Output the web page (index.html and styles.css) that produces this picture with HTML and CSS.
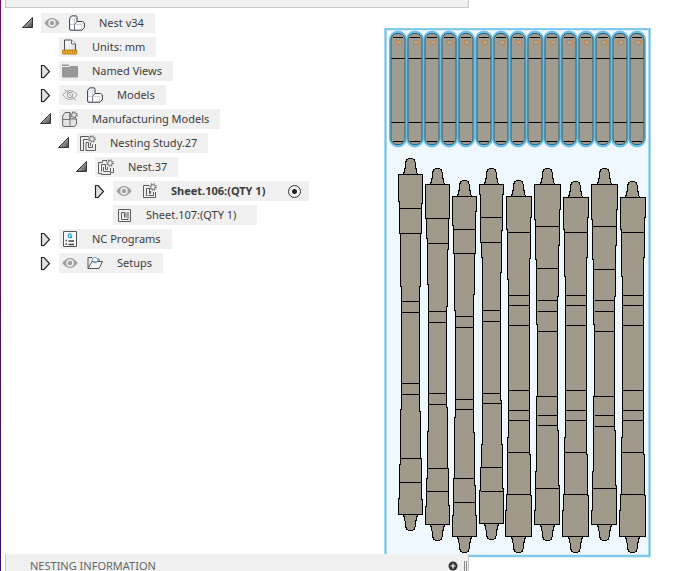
FILE: index.html
```html
<!DOCTYPE html>
<html lang="en">
<head>
<meta charset="utf-8">
<title>Nest v34</title>
<link rel="stylesheet" href="styles.css">
</head>
<body>
<svg class="defs" aria-hidden="true">
  <defs>
    <linearGradient id="shade" x1="0" y1="0" x2="1" y2="1"><stop offset="0" stop-color="#f4f4f4"/><stop offset=".5" stop-color="#999"/><stop offset="1" stop-color="#444"/></linearGradient>
    <linearGradient id="paper" x1="0" y1="0" x2="1" y2="1"><stop offset="0" stop-color="#fff"/><stop offset="1" stop-color="#d8dbe0"/></linearGradient>
    <symbol id="open" viewBox="0 0 20 20"><path d="M1.500 14.500 11.500 4.500V14.500z" fill="url(#shade)" stroke="#333"/></symbol>
    <symbol id="closed" viewBox="0 0 20 20"><path d="M2.500 4.500H5L10.500 10.500 5 16.500H2.500z" fill="#e2e2e4" stroke="#222" stroke-width="1.200"/></symbol>
    <symbol id="eye" viewBox="0 0 16 16"><path d="M.3 8Q4 3 8 3T15.700 8Q12 13 8 13T.3 8z" fill="#a0a0a0"/><circle cx="8" cy="8" r="3" fill="#a0a0a0" stroke="#f0f0f0" stroke-width="1.500"/></symbol>
    <symbol id="eye-off" viewBox="0 0 16 16"><g fill="none" stroke="#a2a2a2"><path d="M.7 8Q4 3.500 8 3.500T15.300 8Q12 12.500 8 12.500T.7 8z"/><circle cx="8" cy="8" r="2.700"/><path d="M2.500 2.500 14 13.500"/></g></symbol>
    <symbol id="cube" viewBox="0 0 16 16"><path d="M.6 3.500 2.600.9H7Q8 .9 8 2V6.500H13.500L15.400 8V12.500L13 15.200H2Q.6 15.200.6 14z" fill="#fbfcfd" stroke="#34383f" stroke-linejoin="round"/><path d="M1 4H5.500L8 1.500M5.500 4V9M1 9.500H5.500L8 7M5.500 9.500V15M6 9.500H12.500L15 8M12.500 9.500V15" fill="none" stroke="#c3c8d0" stroke-width=".8"/><path d="M8 6.500 5.500 9.500V15" fill="none" stroke="#5d626b" stroke-width=".8"/></symbol>
    <symbol id="units" viewBox="0 0 16 16"><path d="M2.500 12V1H9.500L13.500 5V12z" fill="url(#paper)" stroke="#474b52"/><path d="M9.500 1V5H13.500" fill="#fff" stroke="#474b52" stroke-width=".8"/><path d="M.7 11.200H14.700V15H.7z" fill="#f4b63b" stroke="#b97808"/><path d="M3 12.500V13.500M5.500 12.500V13.500M8 12.500V13.500M10.500 12.500V13.500M12.800 12.500V13.500" stroke="#7d4c00"/></symbol>
    <symbol id="folder" viewBox="0 0 16 16"><path d="M0 1.500H7V3H0zM0 4H7L8.500 3H16V14.500H0z" fill="#989898"/></symbol>
    <symbol id="gear" viewBox="0 0 8 8"><circle cx="4" cy="4" r="3" fill="none" stroke="#777" stroke-width="1.700" stroke-dasharray="1.200 1.150"/><circle cx="4" cy="4" r="2.300" fill="#f0f0f0" stroke="#777"/></symbol>
    <symbol id="models" viewBox="0 0 16 16"><path d="M.7 5 3 1.500H8V8H14.500V13L12.500 15.500H2Q.7 15.500.7 14z" fill="#e3e3e3" stroke="#666"/><path d="M.7 8.500H8V15.500M8 1.500V8.500" fill="none" stroke="#777"/><use href="#gear" x="8" y="0" width="8" height="8"/></symbol>
    <symbol id="study" viewBox="0 0 16 16"><path d="M.5 15.500V1.500H9M.5 15.500H3.500V4.500H8.500M6 15.500V7.500H8.500M5.500 15.500H15.500V9M8.500 7.500V12.500H12.500V9.500M10.500 8V11" fill="none" stroke="#5c5c5c"/><use href="#gear" x="8" y="0" width="8" height="8"/></symbol>
    <symbol id="nest" viewBox="0 0 16 16"><path d="M4.500 3.500V1.500H9M4.500 3.500H.5V14.500H3.500V15.500H12.500V13.500H15.500V9M3.500 12.500V5.500H7.500V10.500H9.500V8M5.500 12V8M12.500 9V12.500H5.500" fill="none" stroke="#5c5c5c"/><use href="#gear" x="8" y="0" width="8" height="8"/></symbol>
    <symbol id="sheet-gear" viewBox="0 0 16 16"><path d="M8 2.500H2.500V14.500H14.500V9M5.500 12.500V5.500H8.500V10.500H9.500V8M5 12.500H6.500M12.500 9V12.500H7.500" fill="none" stroke="#5c5c5c"/><use href="#gear" x="8" y="0" width="8" height="8"/></symbol>
    <symbol id="sheet" viewBox="0 0 16 16"><path d="M2.500 2.500H14.500V14.500H2.500zM5.500 12V5.500H8.500V10.500M10 5.500V10.500M5.500 12.500H12V5" fill="none" stroke="#5c5c5c"/></symbol>
    <symbol id="gcode" viewBox="0 0 16 16"><path d="M1.500 .5H14.500V15.500H1.500z" fill="#f8f8f8" stroke="#555"/><path d="M9.500 3.200Q6.300 2.300 6.300 4.700T9.500 6.500V4.900H8.200" fill="none" stroke="#1a9ae0" stroke-width="1.200"/><path d="M3.500 9.500H5M3.500 13H5M6.500 10H12M6.500 13.500H12" stroke="#444" stroke-width="1.300"/></symbol>
    <symbol id="setups" viewBox="0 0 16 16"><path d="M1 13.500V2.500H5L6 4H12V6.500" fill="none" stroke="#555"/><path d="M5 7V5.500Q5 2.500 8 2.500T11 5.500V7" fill="#fff" stroke="#7a9db4"/><path d="M1 13.500 5 6.500H15.500L12 13.500z" fill="#f5f5f5" stroke="#555"/><path d="M6 6.500Q8 9.500 10.500 6.500" fill="#cfe6f3" stroke="#4a9cc6"/></symbol>

    <g id="strip">
      <rect x="-8" y="31.500" width="16" height="115" rx="8" fill="#6cc0e8" stroke="#6cc0e8" stroke-width="2"/>
      <rect x="-7" y="33.500" width="14" height="111" rx="6" fill="#a09c8f" stroke="#2f6076"/>
      <path d="M-5 37.500H5M-6.500 58.500H6.500M-6.500 122.500H6.500M-5 141.500H5" stroke="#000"/>
      <path d="M-1.500 40.500H3.500V44.500H-1.500z" fill="#a8a79b" stroke="#c0834c"/>
    </g>
    <path id="tip" d="M-7 0-6-4-5-8-4.500-13Q-4-15.500-1.500-16H1.500Q4-15.500 4.500-13L5-8 6-4 7 0z"/>
    <g id="part-f">
      <use href="#tip" x="547" y="184"/><use href="#tip" transform="translate(547 524) scale(1 -1)"/>
      <path d="M534 184V219H535V259H536V324H537V396H536V471H535V510H534V524H559V485H558V430H557V296H558V245H559V209H560V184z"/>
    </g>
    <g id="part-g">
      <use href="#tip" x="575" y="197"/><use href="#tip" transform="translate(575 536) scale(1 -1)"/>
      <path d="M563 197V229H564V276H565V437H564V494H563V510H562V536H588V495H587V454H586V257H587V217H588V197z"/>
      <path d="M564 232H587M565 295H586M565 305H586M565 325H586M565 390H586M565 410H586M565 420H586M564 452H586M564 494H587"/>
    </g>
  </defs>
</svg>

<main class="workspace">
  <div class="top-dock"></div>
  <nav class="browser" aria-label="Browser">
    <ul class="tree">
      <li>
        <div class="row"><button class="twisty" aria-label="Collapse Nest v34"><svg><use href="#open"/></svg></button><div class="node"><svg class="icon"><use href="#eye"/></svg><svg class="icon second"><use href="#cube"/></svg><span class="name">Nest v34</span></div></div>
        <ul>
          <li><div class="row"><span class="twisty"></span><div class="node"><svg class="icon"><use href="#units"/></svg><span class="name">Units: mm</span></div></div></li>
          <li><div class="row"><button class="twisty" aria-label="Expand Named Views"><svg><use href="#closed"/></svg></button><div class="node"><svg class="icon"><use href="#folder"/></svg><span class="name">Named Views</span></div></div></li>
          <li><div class="row"><button class="twisty" aria-label="Expand Models"><svg><use href="#closed"/></svg></button><div class="node"><svg class="icon"><use href="#eye-off"/></svg><svg class="icon second"><use href="#cube"/></svg><span class="name">Models</span></div></div></li>
          <li>
            <div class="row"><button class="twisty" aria-label="Collapse Manufacturing Models"><svg><use href="#open"/></svg></button><div class="node"><svg class="icon"><use href="#models"/></svg><span class="name">Manufacturing Models</span></div></div>
            <ul>
              <li>
                <div class="row"><button class="twisty" aria-label="Collapse Nesting Study.27"><svg><use href="#open"/></svg></button><div class="node"><svg class="icon"><use href="#study"/></svg><span class="name">Nesting Study.27</span></div></div>
                <ul>
                  <li>
                    <div class="row"><button class="twisty" aria-label="Collapse Nest.37"><svg><use href="#open"/></svg></button><div class="node"><svg class="icon"><use href="#nest"/></svg><span class="name">Nest.37</span></div></div>
                    <ul>
                      <li><div class="row"><button class="twisty" aria-label="Expand Sheet.106"><svg><use href="#closed"/></svg></button><div class="node"><svg class="icon"><use href="#eye"/></svg><svg class="icon second"><use href="#sheet-gear"/></svg><label class="name sheet-name active" for="sheet106">Sheet.106:(QTY 1)</label><input class="activate" type="radio" id="sheet106" name="sheet" checked></div></div></li>
                      <li><div class="row"><span class="twisty"></span><div class="node"><svg class="icon"><use href="#sheet"/></svg><span class="name sheet-name">Sheet.107:(QTY 1)</span></div></div></li>
                    </ul>
                  </li>
                </ul>
              </li>
            </ul>
          </li>
          <li><div class="row"><button class="twisty" aria-label="Expand NC Programs"><svg><use href="#closed"/></svg></button><div class="node"><svg class="icon"><use href="#gcode"/></svg><span class="name">NC Programs</span></div></div></li>
          <li><div class="row"><button class="twisty" aria-label="Expand Setups"><svg><use href="#closed"/></svg></button><div class="node"><svg class="icon"><use href="#eye"/></svg><svg class="icon second"><use href="#setups"/></svg><span class="name">Setups</span></div></div></li>
        </ul>
      </li>
    </ul>
  </nav>

  <svg class="sheet" viewBox="384 28 267 530" role="img" aria-label="Nested sheet">
    <rect x="385.500" y="29" width="264" height="527" fill="#f0f8ff" stroke="#b9e2f6" stroke-width="3"/>
    <rect x="385.500" y="29" width="264" height="527" fill="none" stroke="#68bfe9" stroke-width="1.400"/>
    <use href="#strip" x="398"/><use href="#strip" x="415"/><use href="#strip" x="432"/><use href="#strip" x="449"/><use href="#strip" x="466"/>
    <use href="#strip" x="484"/><use href="#strip" x="501"/><use href="#strip" x="518"/><use href="#strip" x="535"/><use href="#strip" x="552"/>
    <use href="#strip" x="569"/><use href="#strip" x="586"/><use href="#strip" x="603"/><use href="#strip" x="620"/><use href="#strip" x="637"/>
    <g class="parts" transform="translate(.5 .5)">
      <use href="#tip" x="410" y="174"/><use href="#tip" transform="translate(410 514) scale(1 -1)"/>
      <path d="M398 174V201H399V233H400V286H401V409H400V464H399V498H398V514H422V499H421V458H420V411H419V286H420V233H421V203H422V174z"/>
      <path d="M399 208H421M399 233H421M401 301H419M401 312H419M401 383H419M401 394H419M400 458H420M399 482H421"/>

      <use href="#tip" x="437" y="184"/><use href="#tip" transform="translate(437 524) scale(1 -1)"/>
      <path d="M425 184V218H426V238H427V284H428V431H427V478H426V506H425V524H449V505H448V468H447V407H446V306H447V249H448V218H449V184z"/>
      <path d="M426 218H448M427 243H448M428 311H446M428 322H446M428 393H446M428 404H446M427 468H447M426 491H448"/>

      <use href="#tip" x="464" y="196"/><use href="#tip" transform="translate(464 536) scale(1 -1)"/>
      <path d="M452 196V225H453V253H454V310H455V417H454V478H453V515H452V536H476V515H475V485H474V432H473V294H474V253H475V211H476V196z"/>
      <path d="M453 229H475M454 253H474M455 316H473M455 327H473M455 399H473M455 409H473M454 478H474M453 502H475"/>

      <use href="#tip" x="491" y="184"/><use href="#tip" transform="translate(491 523) scale(1 -1)"/>
      <path d="M479 184V194H480V242H481V257H482V444H481V467H480V490H479V523H503V488H502V444H501V400H500V272H501V230H502V194H503V184z"/>
      <path d="M480 217H502M481 242H501M482 310H500M482 321H500M482 393H500M482 403H500M481 467H501M480 491H502"/>

      <use href="#tip" x="518" y="196"/><use href="#tip" transform="translate(518 536) scale(1 -1)"/>
      <path d="M506 196V229H507V279H508V437H507V494H506V510H505V536H531V495H530V454H529V258H530V217H531V196z"/>
      <path d="M507 232H530M508 295H529M508 305H529M508 325H529M508 390H529M508 410H529M508 420H529M507 452H529M507 494H530"/>

      <use href="#part-f"/>
      <path d="M535 226H559M536 268H558M537 300H557M537 311H557M537 331H557M537 396H557M537 415H557M537 425H557M535 488H558"/>
      <use href="#part-g"/>
      <use href="#part-f" x="57"/>
      <path d="M592 226H616M593 269H615M594 300H614M594 311H614M594 331H614M594 396H614M594 415H614M594 426H614M592 488H615"/>
      <use href="#part-g" x="57"/>
    </g>
  </svg>

  <section class="bottom-dock">
    <h2>NESTING INFORMATION</h2>
    <button class="add" aria-label="Add"><svg viewBox="0 0 10 10"><circle cx="5" cy="5" r="4.500" fill="#333"/><path d="M2.500 5H7.500M5 2.500V7.500" stroke="#fff" stroke-width="1.200"/></svg></button>
    <span class="grip"></span>
  </section>
</main>
</body>
</html>
```
FILE: styles.css
```css
* { box-sizing: border-box; }

body {
  margin: 0;
  background: #fff;
  color: #3c3c3c;
  font: 11px/20px "Noto Sans", sans-serif;
}

.defs { position: absolute; width: 0; height: 0; }

button { padding: 0; border: 0; background: none; }

ul { margin: 0; padding: 0; list-style: none; }

.workspace {
  position: relative;
  display: flex;
  align-items: flex-start;
  min-height: 100vh;
  border-left: 1px solid;
  border-image: linear-gradient(#701070, #30106c) 1;
  overflow: hidden;
}

.browser { flex: 1; padding: 13px 0 0 20px; }

.tree ul { padding-left: 18px; }

.row { display: flex; height: 24px; }

.twisty { flex: none; width: 20px; height: 20px; }
.twisty svg { display: block; width: 20px; height: 20px; }

.node {
  display: flex;
  align-items: center;
  height: 20px;
  padding: 0 11px 0 3px;
  background: #f0f0f0;
  white-space: nowrap;
}

.icon { flex: none; width: 16px; height: 16px; }
.second { margin-left: 9px; }
.name { margin-left: 14px; }
.sheet-name { min-width: 100px; }
.active { font-weight: 700; }

.activate {
  appearance: none;
  width: 13px;
  height: 13px;
  margin: 0 -3px 0 17px;
  border: 1px solid #333;
  border-radius: 50%;
  background: radial-gradient(circle, #222 2px, transparent 3px);
}

.sheet { flex: none; width: 267px; height: 530px; margin: 28px 26px 0 0; }

.parts { fill: #a09a8c; stroke: #000; stroke-width: 1; shape-rendering: crispEdges; }

.top-dock, .bottom-dock {
  position: absolute;
  left: 4px;
  width: 464px;
  background: #f0f0f0;
  border: 1px solid #c8c8c8;
}

.top-dock { top: 0; height: 8px; border-top: 0; }

.bottom-dock {
  bottom: 0;
  display: flex;
  align-items: flex-start;
  padding: 7px 1px 0 24px;
  border-width: 0 1px;
}

.bottom-dock h2 { flex: 1; margin: 0; color: #666; font-size: 11px; font-weight: 400; line-height: 10px; }

.add { width: 10px; height: 10px; margin-right: 6px; }
.add svg { display: block; }

.grip { width: 3px; height: 10px; border: solid #888; border-width: 0 1px; }
```
